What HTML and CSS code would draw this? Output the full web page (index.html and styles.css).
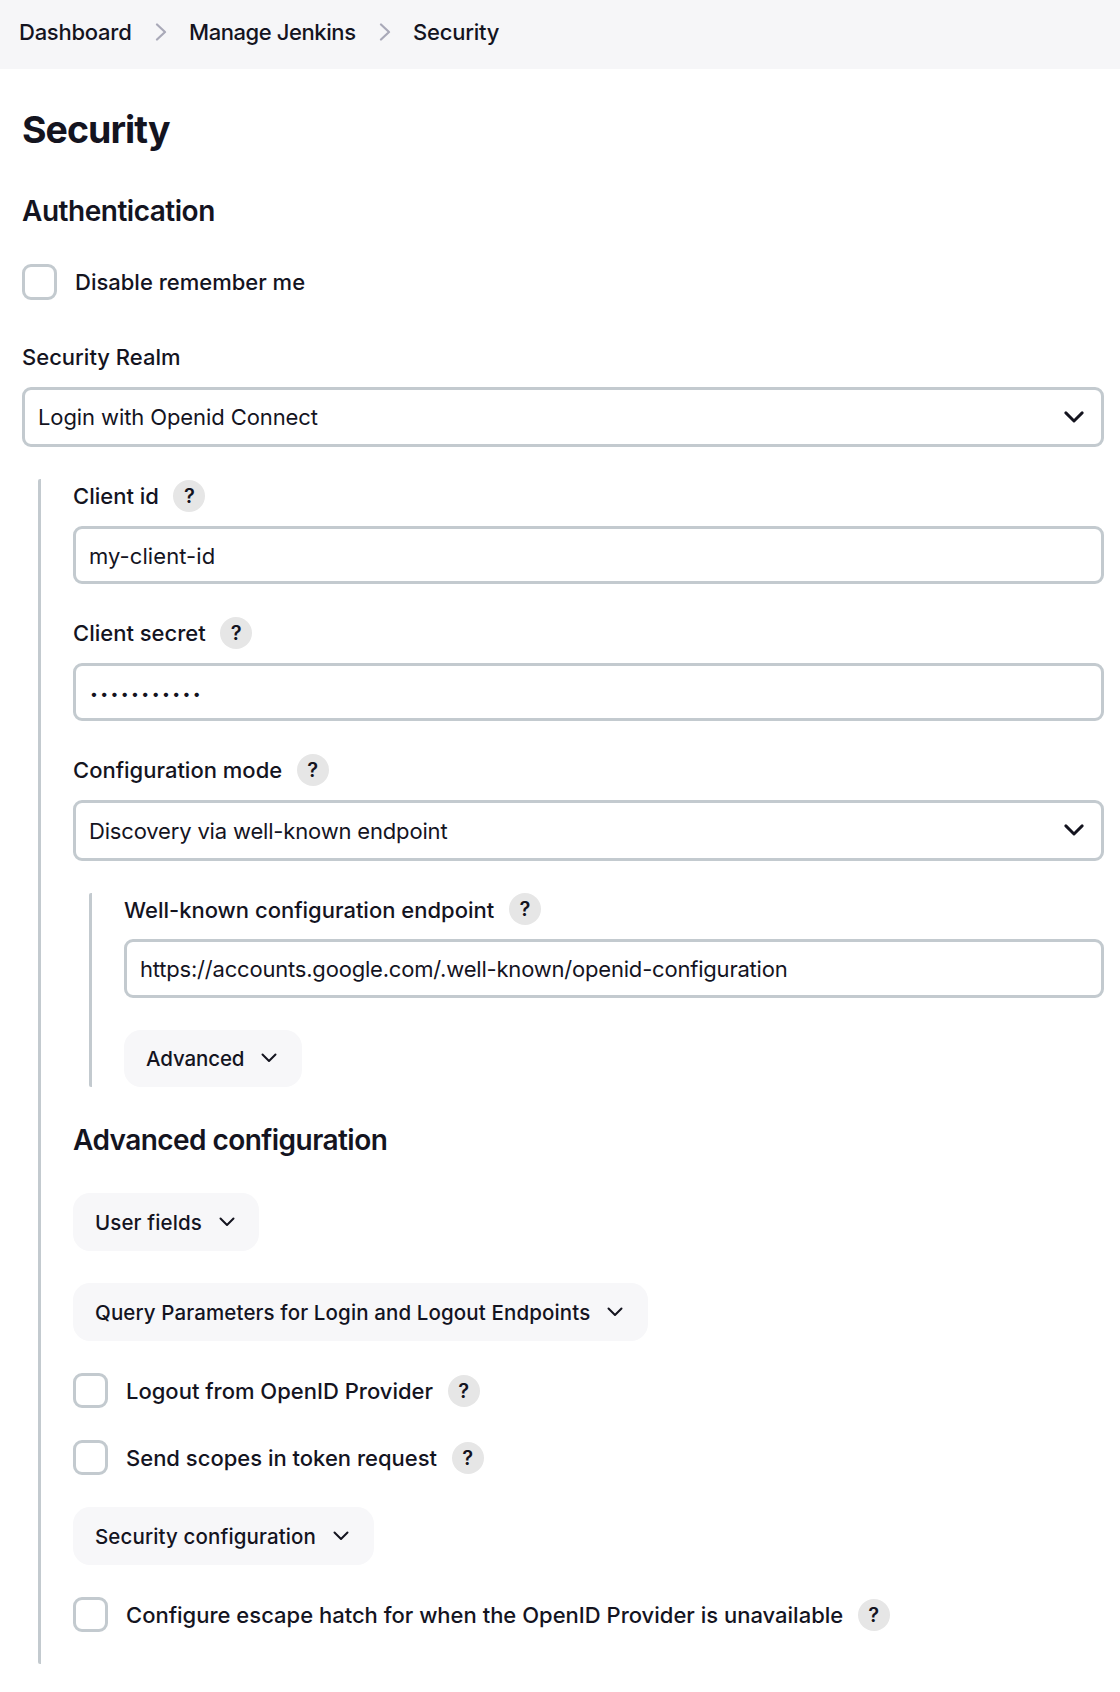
FILE: index.html
```html
<!DOCTYPE html>
<html lang="en">
<head>
<meta charset="utf-8">
<title>Security</title>
<link rel="stylesheet" href="styles.css">
</head>
<body>
<svg class="defs" width="0" height="0">
  <symbol id="sep" viewBox="0 0 12 18"><path d="M2 1.5 L10 9 L2 16.5"/></symbol>
  <symbol id="down" viewBox="0 0 16 10"><path d="M1.5 1.5 L8 8 L14.5 1.5"/></symbol>
</svg>
<nav class="crumbs">
  <span class="crumb">Dashboard</span>
  <svg class="sep"><use href="#sep"/></svg>
  <span class="crumb parent">Manage Jenkins</span>
  <svg class="sep"><use href="#sep"/></svg>
  <span class="crumb">Security</span>
</nav>
<main class="page">
  <h1 class="title">Security</h1>
  <h2 class="heading">Authentication</h2>
  <div class="check check-first"><span class="box"></span><span class="label">Disable remember me</span></div>
  <div class="caption caption-realm"><span class="label">Security Realm</span></div>
  <div class="field select"><span>Login with Openid Connect</span><svg class="arrow"><use href="#down"/></svg></div>
  <section class="group outer">
    <div class="caption"><span class="label">Client id</span><span class="help">?</span></div>
    <div class="field text"><span>my-client-id</span></div>
    <div class="caption next"><span class="label">Client secret</span><span class="help">?</span></div>
    <div class="field"><span class="dots">•••••••••••</span></div>
    <div class="caption next"><span class="label">Configuration mode</span><span class="help">?</span></div>
    <div class="field select mode"><span>Discovery via well-known endpoint</span><svg class="arrow"><use href="#down"/></svg></div>
    <section class="group inner">
      <div class="caption"><span class="label low">Well-known configuration endpoint</span><span class="help">?</span></div>
      <div class="field url"><span>https://accounts.google.com/.well-known/openid-configuration</span></div>
      <div class="button advanced"><span>Advanced</span><svg class="chev"><use href="#down"/></svg></div>
    </section>
    <h2 class="heading sub">Advanced configuration</h2>
    <div class="button"><span>User fields</span><svg class="chev"><use href="#down"/></svg></div>
    <div class="button"><span>Query Parameters for Login and Logout Endpoints</span><svg class="chev"><use href="#down"/></svg></div>
    <div class="check"><span class="box"></span><span class="label low">Logout from OpenID Provider</span><span class="help">?</span></div>
    <div class="check"><span class="box"></span><span class="label low">Send scopes in token request</span><span class="help">?</span></div>
    <div class="button"><span>Security configuration</span><svg class="chev"><use href="#down"/></svg></div>
    <div class="check"><span class="box"></span><span class="label low">Configure escape hatch for when the OpenID Provider is unavailable</span><span class="help">?</span></div>
  </section>
</main>
</body>
</html>
```
FILE: styles.css
```css
* { box-sizing: border-box; }
body { margin: 0; background: #fff; color: #14141f; font-family: Inter, "Liberation Sans", sans-serif; font-size: 22px; line-height: 32px; white-space: nowrap; }
.defs { display: block; height: 0; }
svg { fill: none; stroke: currentColor; stroke-linecap: round; stroke-linejoin: round; flex: none; }
.crumbs { display: flex; align-items: center; height: 69px; padding: 0 0 5px 19px; background: #f6f6f8; font-weight: 480; letter-spacing: -0.25px; }
.parent { letter-spacing: -0.42px; }
.sep { width: 12px; height: 18px; margin: 0 22.5px 0 23px; color: #a9a9b8; stroke-width: 2.2; }
.page { padding: 0 16px 0 22px; }
.title { margin: 41px 0 0; font-size: 37.5px; line-height: 40px; font-weight: 670; letter-spacing: -0.95px; }
.heading { margin: 45px 0 0; font-size: 28px; line-height: 32px; font-weight: 600; letter-spacing: -0.48px; }
.label { font-weight: 500; }
.low { padding-top: 1px; }
.check { display: flex; align-items: center; height: 35px; margin-bottom: 32px; }
.check-first { height: 36px; margin: 37px 0 0; }
.box { width: 35px; height: 100%; margin-right: 18px; border: 3px solid #c3cacf; border-radius: 9px; }
.caption { display: flex; align-items: center; height: 32px; margin-bottom: 14px; }
.caption-realm { margin-top: 41px; margin-bottom: 14px; }
.help { width: 32px; height: 32px; margin-left: 14.6px; border-radius: 50%; background: #e6e6e6; text-align: center; font-size: 20px; font-weight: 600; }
.field { display: flex; align-items: center; justify-content: space-between; height: 58px; padding: 0 17.5px 0 13px; border: 3px solid #c3cacf; border-radius: 9px; letter-spacing: -0.1px; }
.text { padding-top: 2px; letter-spacing: 0.08px; }
.select { height: 60px; }
.mode { height: 61px; letter-spacing: -0.17px; }
.url { height: 59px; letter-spacing: -0.2px; }
.next { margin-top: 33px; }
.arrow { width: 20px; height: 12.5px; stroke-width: 2.3; }
.group { border-left: 3px solid #c3cacf; border-radius: 2px; padding-left: 32px; }
.outer { margin: 32px 0 0 16px; padding-top: 1px; height: 1185px; }
.inner { margin: 32px 0 0 16px; }
.dots { font-size: 14px; padding: 3px 0 0 1px; letter-spacing: 2.4px; }
.button { display: flex; align-items: center; width: fit-content; height: 58px; margin-bottom: 32px; padding: 1px 24.5px 0 22px; border-radius: 17px; background: #f7f7f9; font-size: 20.5px; font-weight: 480; letter-spacing: 0.12px; }
.advanced { height: 57px; margin: 32px 0 0; letter-spacing: -0.12px; }
.chev { width: 16px; height: 10px; margin: -2px 0 0 17px; stroke-width: 2; }
.sub { margin: 37px 0; letter-spacing: -0.55px; }
```
